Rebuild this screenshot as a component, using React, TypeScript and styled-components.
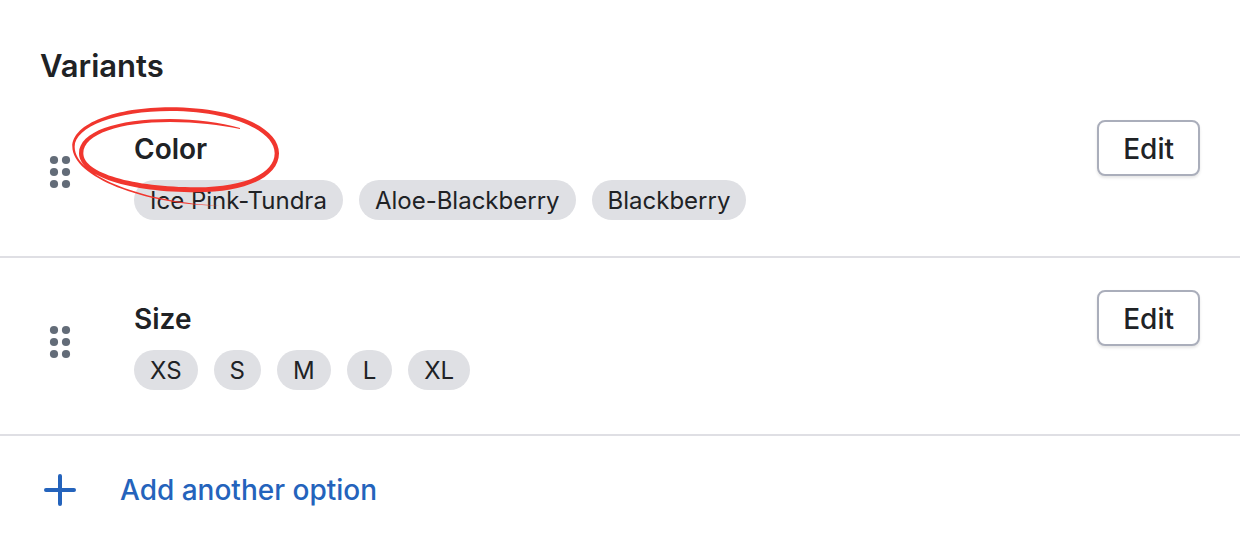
import React from "react";
import styled, { createGlobalStyle } from "styled-components";

const GlobalStyle = createGlobalStyle`
  *, *::before, *::after { box-sizing: border-box; }
  body {
    margin: 0;
    background: #ffffff;
    color: #202225;
    font-family: Inter, "Liberation Sans", sans-serif;
    -webkit-font-smoothing: antialiased;
  }
`;

const Card = styled.section`
  padding-top: 44px;
`;

const Heading = styled.h2`
  margin: 0;
  padding: 0 40px;
  font-size: 31px;
  line-height: 44px;
  font-weight: 600;
`;

const OptionList = styled.ul`
  list-style: none;
  margin: 0;
  padding: 0 0 8px;
`;

const OptionRow = styled.li`
  display: flex;
  align-items: flex-start;
  padding: 32px 40px 36px;

  & + & {
    border-top: 2px solid #dfdfe4;
  }
`;

const DragHandle = styled.button`
  flex: none;
  width: 40px;
  height: 40px;
  margin: 32px 54px 0 0;
  padding: 0;
  border: 0;
  background: none;
  color: #636c78;
  cursor: grab;

  svg { display: block; }
`;

const OptionBody = styled.div`
  flex: 1;
  min-width: 0;
  padding-top: 8px;
`;

const OptionName = styled.h3`
  position: relative;
  width: fit-content;
  margin: 0 0 12px;
  padding-top: 2px;
  font-size: 28px;
  line-height: 38px;
  font-weight: 600;
`;

const Circled = styled.svg`
  position: absolute;
  z-index: 1;
  left: -64px;
  top: -23px;
  pointer-events: none;
`;

const ChipList = styled.ul`
  display: flex;
  flex-wrap: wrap;
  gap: 16px;
  list-style: none;
  margin: 0;
  padding: 0;
`;

const Chip = styled.li`
  padding: 2px 16px 0;
  border-radius: 20px;
  background: #dfe0e4;
  font-size: 24px;
  line-height: 38px;
  white-space: nowrap;
`;

const EditButton = styled.button`
  flex: none;
  height: 56px;
  padding: 2px 24px 0;
  border: 2px solid #aaaebb;
  border-radius: 8px;
  background: #ffffff;
  box-shadow: 0 2px 3px rgba(0, 0, 0, 0.1);
  color: inherit;
  font: 500 28px/38px Inter, "Liberation Sans", sans-serif;
  cursor: pointer;
`;

const Footer = styled.div`
  padding: 34px 40px;
  border-top: 2px solid #dfdfe4;
`;

const AddButton = styled.button`
  display: flex;
  align-items: center;
  gap: 40px;
  padding: 0;
  border: 0;
  background: none;
  color: #2463bc;
  font: 500 28px/40px Inter, "Liberation Sans", sans-serif;
  cursor: pointer;
`;

const options = [
  { name: "Color", values: ["Ice Pink-Tundra", "Aloe-Blackberry", "Blackberry"], circled: true },
  { name: "Size", values: ["XS", "S", "M", "L", "XL"], circled: false },
];

function DotsIcon() {
  return (
    <svg width="40" height="40" viewBox="0 0 40 40" fill="currentColor" aria-hidden="true">
      {[8, 20, 32].map((y) => (
        <React.Fragment key={y}>
          <circle cx="14" cy={y} r="4.1" />
          <circle cx="26" cy={y} r="4.1" />
        </React.Fragment>
      ))}
    </svg>
  );
}

function PlusIcon() {
  return (
    <svg width="40" height="40" viewBox="0 0 40 40" fill="none" stroke="currentColor" strokeWidth="4" strokeLinecap="round" aria-hidden="true">
      <path d="M20 6v28M6 20h28" />
    </svg>
  );
}

/* Hand-drawn double loop, thick in the middle of the stroke and thin at both ends. */
function HandDrawnCircle() {
  return (
    <Circled width="214" height="104" viewBox="150 225 642 312" fill="#f1362e" aria-hidden="true">
      <path
        d="M660 294 C600 278 530 267 450 267 C290 267 177 305 177 370 C177 440 330 487 530 487
           C680 487 777 440 777 370 C777 290 640 232 450 232 C290 232 157 280 157 350
           C157 440 370 524 600 527
           C380 517 164 440 164 350 C164 290 290 243 450 243 C630 243 764 300 764 370
           C764 432 670 472 530 472 C340 472 190 430 190 370 C190 312 300 276 450 276
           C530 276 600 285 660 297 Z"
      />
    </Circled>
  );
}

export default function App() {
  return (
    <>
      <GlobalStyle />
      <Card>
        <Heading>Variants</Heading>
        <OptionList>
          {options.map((option) => (
            <OptionRow key={option.name}>
              <DragHandle type="button" aria-label={`Reorder ${option.name}`}>
                <DotsIcon />
              </DragHandle>
              <OptionBody>
                <OptionName>
                  {option.name}
                  {option.circled && <HandDrawnCircle />}
                </OptionName>
                <ChipList>
                  {option.values.map((value) => (
                    <Chip key={value}>{value}</Chip>
                  ))}
                </ChipList>
              </OptionBody>
              <EditButton type="button">Edit</EditButton>
            </OptionRow>
          ))}
        </OptionList>
        <Footer>
          <AddButton type="button">
            <PlusIcon />
            Add another option
          </AddButton>
        </Footer>
      </Card>
    </>
  );
}
